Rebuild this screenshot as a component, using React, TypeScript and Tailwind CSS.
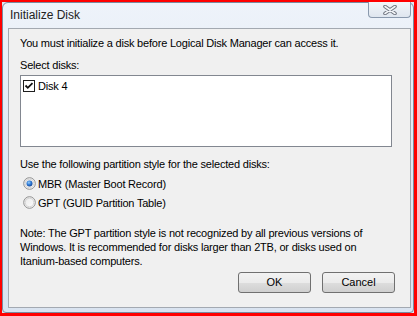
import React from 'react';

function Radio({ checked }: { checked?: boolean }) {
  return (
    <svg width="13" height="13" viewBox="0 0 13 13" className="shrink-0">
      <defs>
        <linearGradient id="rb" x1="0" y1="0" x2="1" y2="1">
          <stop offset="0" stopColor="#e8e8e8" />
          <stop offset="1" stopColor="#fdfdfd" />
        </linearGradient>
        <radialGradient id="rd" cx="0.4" cy="0.35" r="0.7">
          <stop offset="0" stopColor="#9ad0fb" />
          <stop offset="0.5" stopColor="#2f7bd6" />
          <stop offset="1" stopColor="#14418f" />
        </radialGradient>
      </defs>
      <circle cx="6.5" cy="6.5" r="5.8" fill="url(#rb)" stroke="#8f8f8f" strokeWidth="1" />
      <circle cx="6.5" cy="6.5" r="4.3" fill="none" stroke="#d4d4d4" strokeWidth="1" />
      {checked && <circle cx="6.5" cy="6.5" r="3" fill="url(#rd)" />}
    </svg>
  );
}

function Checkbox() {
  return (
    <svg width="12" height="12" viewBox="0 0 12 12" className="shrink-0">
      <rect x="0.5" y="0.5" width="11" height="11" fill="#fff" stroke="#1e1e1e" />
      <path d="M2.5 5.5 L4.8 7.8 L9.5 3.2" fill="none" stroke="#111" strokeWidth="1.8" />
    </svg>
  );
}

function DialogButton({ label }: { label: string }) {
  return (
    <button className="w-[73px] h-[21px] rounded-[3px] border border-[#707070] bg-[linear-gradient(to_bottom,#f2f2f2_0%,#ebebeb_50%,#dddddd_51%,#cfcfcf_100%)] text-[11px] leading-none text-black">
      {label}
    </button>
  );
}

export default function App() {
  return (
    <div className="w-[417px] h-[316px] border-solid border-[#ff0000] border-t-2 border-l-2 border-r-[3px] border-b-[3px] bg-[#dde6f1] font-['Liberation_Sans',Arial,sans-serif]">
      <div className="h-full flex flex-col rounded-t-[6px] rounded-b-[4px] border border-[#7a8a9f] bg-[linear-gradient(to_bottom,#eef3fa_0%,#e2eaf5_40%,#d9e3f0_100%)]">
        {/* title bar */}
        <div className="h-[25px] flex items-start justify-between">
          <span className="pl-[7px] pt-[5px] text-[12px] leading-[14px] text-[#222]">Initialize Disk</span>
          <div className="mr-[2px] mt-[-1px] w-[43px] h-[16px] rounded-b-[4px] border border-t-0 border-[#8a99ad] bg-[linear-gradient(to_bottom,#f3f6fa,#dfe6ef)] flex items-center justify-center">
            <svg width="14" height="10" viewBox="0 0 14 10">
              <path d="M2 1.5 L12 8.5 M12 1.5 L2 8.5" stroke="#6f7580" strokeWidth="3.6" strokeLinecap="round" />
              <path d="M2 1.5 L12 8.5 M12 1.5 L2 8.5" stroke="#f4f6f9" strokeWidth="1.6" strokeLinecap="round" />
            </svg>
          </div>
        </div>

        {/* dialog body */}
        <div className="flex-1 ml-[5px] mr-[2px] mb-[4px] border border-[#a3a9b1] bg-[#f0f0f0] pl-[11px] pr-[15px] pt-[7px] text-[11px] leading-[14px] tracking-[-0.2px] text-black">
          <p>You must initialize a disk before Logical Disk Manager can access it.</p>
          <p className="mt-[8px]">Select disks:</p>
          <div className="mt-[3px] w-[372px] h-[72px] border border-[#828790] bg-white px-[2px] pt-[4px]">
            <div className="flex items-center gap-[3px] h-[12px]">
              <Checkbox />
              <span className="leading-[12px]">Disk 4</span>
            </div>
          </div>
          <p className="mt-[10px]">Use the following partition style for the selected disks:</p>
          <div className="mt-[3px] flex flex-col pl-[3px]">
            <label className="h-[19px] flex items-center gap-[2px]">
              <Radio checked />
              <span>MBR (Master Boot Record)</span>
            </label>
            <label className="h-[19px] flex items-center gap-[2px]">
              <Radio />
              <span>GPT (GUID Partition Table)</span>
            </label>
          </div>
          <p className="mt-[14px]">
            Note: The GPT partition style is not recognized by all previous versions of
            <br />
            Windows. It is recommended for disks larger than 2TB, or disks used on
            <br />
            Itanium-based computers.
          </p>
          <div className="mt-[4px] flex justify-end gap-[11px] tracking-normal">
            <DialogButton label="OK" />
            <DialogButton label="Cancel" />
          </div>
        </div>
      </div>
    </div>
  );
}
